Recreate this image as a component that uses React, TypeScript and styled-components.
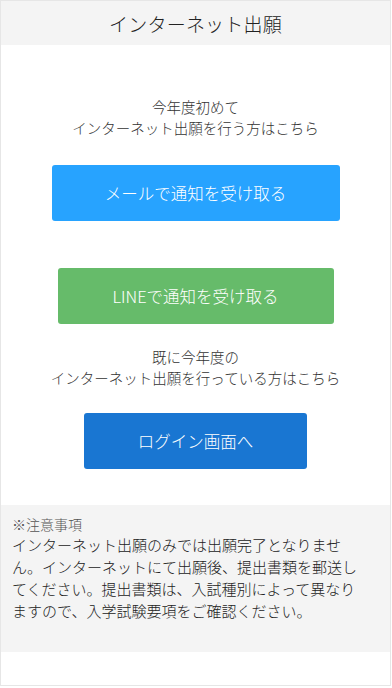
import styled, { createGlobalStyle } from 'styled-components'

const GlobalStyle = createGlobalStyle`
  html, body {
    margin: 0;
    padding: 0;
    background: #fff;
  }
  body {
    font-family: "Noto Sans CJK JP", "Noto Sans", sans-serif;
    font-weight: 300;
    color: #333;
  }
`

type ButtonProps = {
  $width: number
  $color: string
}

const App = () => {
  return (
    <>
      <GlobalStyle />
      <Frame>
        <Header>
          <Title>インターネット出願</Title>
        </Header>
        <Main>
          <Lead>
            今年度初めて
            <br />
            インターネット出願を行う方はこちら
          </Lead>
          <ActionButton $width={288} $color='#27a3ff' style={{ marginTop: 27 }}>
            メールで通知を受け取る
          </ActionButton>
          <ActionButton $width={276} $color='#66bb6a' style={{ marginTop: 47 }}>
            LINEで通知を受け取る
          </ActionButton>
          <Lead style={{ marginTop: 22 }}>
            既に今年度の
            <br />
            インターネット出願を行っている方はこちら
          </Lead>
          <ActionButton $width={223} $color='#1976d2' style={{ marginTop: 25 }}>
            ログイン画面へ
          </ActionButton>
        </Main>
        <Notice>
          <NoticeTitle>※注意事項</NoticeTitle>
          <NoticeBody>
            インターネット出願のみでは出願完了となりません。インターネットにて出願後、提出書類を郵送してください。提出書類は、入試種別によって異なりますので、入学試験要項をご確認ください。
          </NoticeBody>
        </Notice>
      </Frame>
    </>
  )
}

const Frame = styled.div`
  width: 391px;
  height: 686px;
  box-sizing: border-box;
  border: 1px solid #e6e6e6;
  display: flex;
  flex-direction: column;
`

const Header = styled.header`
  height: 44px;
  background: #f4f4f4;
  display: flex;
  align-items: center;
  justify-content: center;
`

const Title = styled.h1`
  margin: 0;
  font-size: 19px;
  font-weight: 300;
  color: #222;
  letter-spacing: 0.2px;
`

const Main = styled.main`
  display: flex;
  flex-direction: column;
  align-items: center;
  padding-top: 51px;
`

const Lead = styled.p`
  margin: 0;
  font-size: 14.5px;
  line-height: 21px;
  text-align: center;
  color: #333;
`

const ActionButton = styled.button<ButtonProps>`
  width: ${props => props.$width}px;
  height: 56px;
  border: none;
  border-radius: 3px;
  background: ${props => props.$color};
  color: #fff;
  font-family: inherit;
  font-weight: 300;
  font-size: 16.5px;
  cursor: pointer;
`

const Notice = styled.section`
  margin-top: 36px;
  background: #f4f4f4;
  padding: 9px 24px 30px 11px;
`

const NoticeTitle = styled.div`
  font-size: 14px;
  line-height: 20px;
  color: #555;
`

const NoticeBody = styled.p`
  margin: 0;
  font-size: 15px;
  line-height: 22px;
  color: #222;
  line-break: strict;
`

export default App
